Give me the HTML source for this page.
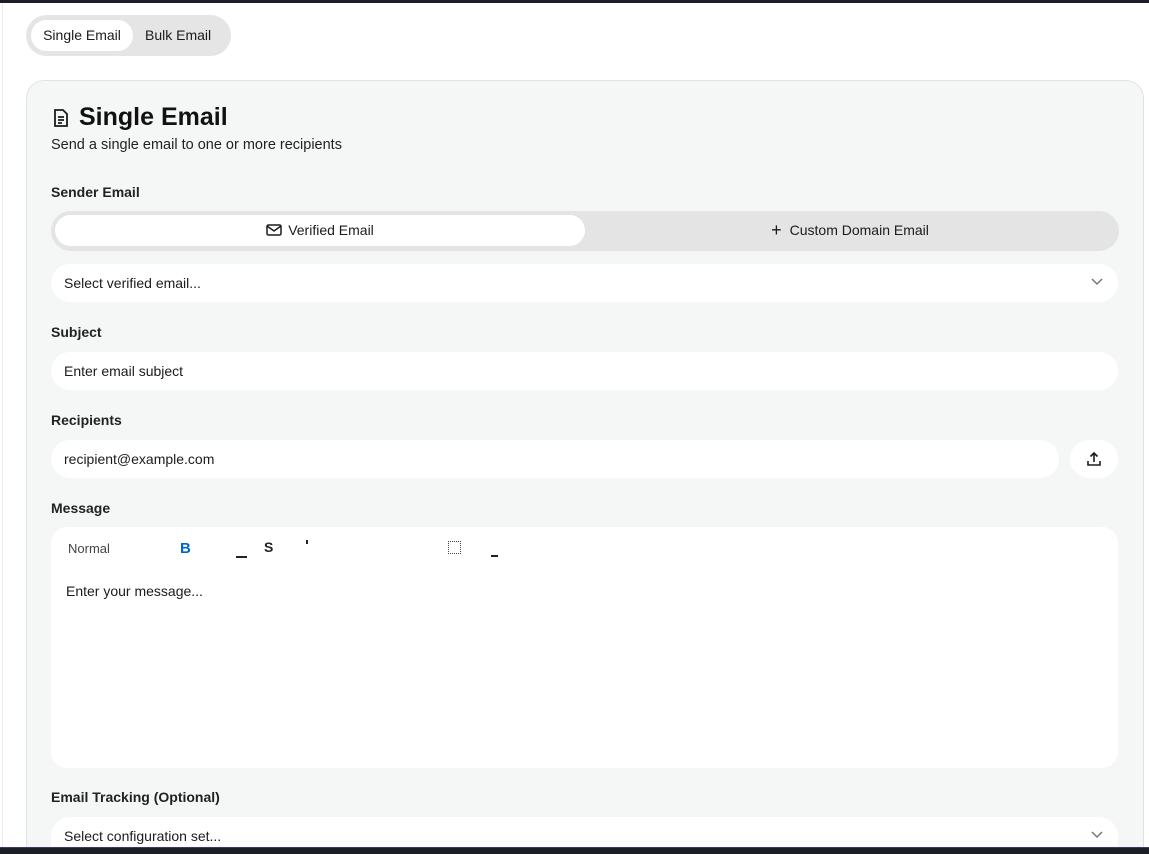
<!DOCTYPE html>
<html style="width:1149px;height:854px;overflow:hidden"><head><meta charset="utf-8"><style>
*{box-sizing:border-box;margin:0;padding:0}
body{width:1149px;height:854px;overflow:hidden;background:#fff;font-family:"Liberation Sans",sans-serif;color:#1b1b1b;position:relative}
.abs{position:absolute}
.topbar{left:0;top:0;width:1149px;height:3px;background:#1b1e25}
.leftline{left:2px;top:3px;width:1px;height:844px;background:#e8ecef}
.bot{left:0;top:847px;width:1149px;height:7px;background:#1b1e25;border-top:1px solid #3c3a6a;z-index:5}
.tabs{left:26px;top:15px;width:205px;height:41px;background:#e5e5e5;border-radius:21px}
.tab{top:5px;height:31px;line-height:31px;font-size:14px;color:#1b1b1b}
.card{left:26px;top:80px;width:1118px;height:767px;background:#f5f7f6;border:1px solid #dce4ea;border-bottom:none;border-radius:18px 18px 0 0}
.lbl{font-size:14px;font-weight:bold;color:#222;left:51px}
.field{left:51px;width:1067px;height:38px;background:#fff;border-radius:19px;font-size:14px;line-height:38px;padding-left:13px;color:#1b1b1b}
.chev{position:absolute;right:15px;top:14px}
</style></head><body>
<div class="abs topbar"></div>
<div class="abs leftline"></div>
<div class="abs tabs">
  <div class="abs tab" style="left:5px;width:102px;background:#fff;border-radius:16px;text-align:center">Single Email</div>
  <div class="abs tab" style="left:119px">Bulk Email</div>
</div>
<div class="abs card"></div>
<svg class="abs" style="left:52px;top:108px" width="18" height="20" viewBox="0 0 18 20" fill="none" stroke="#1b1b1b" stroke-width="1.8"><path d="M3 2h8l4 4v12H3z"/><path d="M6 9h6M6 12h6M6 15h4"/></svg>
<div class="abs" style="left:79px;top:103px;font-size:25px;font-weight:bold;color:#111">Single Email</div>
<div class="abs" style="left:51px;top:137px;font-size:14.5px;color:#222">Send a single email to one or more recipients</div>
<div class="abs lbl" style="top:184px">Sender Email</div>
<div class="abs" style="left:51px;top:211px;width:1068px;height:40px;background:#e4e4e4;border-radius:20px"></div>
<div class="abs" style="left:55px;top:215px;width:530px;height:31px;background:#fff;border-radius:16px;font-size:14px;line-height:31px;text-align:center;color:#1b1b1b">
<svg width="16" height="12" viewBox="0 0 16 12" style="vertical-align:-1px;margin-right:6px" fill="none" stroke="#1b1b1b" stroke-width="1.5"><rect x="1" y="1" width="14" height="10" rx="1.5"/><path d="M1 2l7 5 7-5"/></svg>Verified Email</div>
<div class="abs" style="left:585px;top:215px;width:530px;height:31px;font-size:14px;line-height:31px;text-align:center;color:#1b1b1b"><span style="font-size:18px;margin-right:8px;vertical-align:-1px">+</span>Custom Domain Email</div>
<div class="abs field" style="top:264px">Select verified email...<svg class="chev" width="12" height="8" viewBox="0 0 12 8" fill="none" stroke="#777" stroke-width="1.5"><path d="M1 1l5 5 5-5"/></svg></div>
<div class="abs lbl" style="top:324px">Subject</div>
<div class="abs field" style="top:352px">Enter email subject</div>
<div class="abs lbl" style="top:412px">Recipients</div>
<div class="abs field" style="top:440px;width:1008px">recipient@example.com</div>
<div class="abs" style="left:1070px;top:440px;width:48px;height:38px;background:#fff;border-radius:19px"></div>
<svg class="abs" style="left:1086px;top:451px" width="16" height="16" viewBox="0 0 16 16" fill="none" stroke="#1b1b1b" stroke-width="1.6"><path d="M2 10v4h12v-4M8 11V2M4.5 5.5L8 2l3.5 3.5"/></svg>
<div class="abs lbl" style="top:500px">Message</div>
<div class="abs" style="left:51px;top:527px;width:1067px;height:241px;background:#fff;border-radius:16px"></div>
<div class="abs" style="left:68px;top:541px;font-size:13px;color:#444">Normal</div>
<div class="abs" style="left:180px;top:540px;font-size:15px;font-weight:bold;color:#0066cc">B</div>
<div class="abs" style="left:236px;top:556px;width:11px;height:1.5px;background:#222"></div>
<div class="abs" style="left:264px;top:539px;font-size:14px;font-weight:bold;color:#222">S</div>
<div class="abs" style="left:306px;top:540px;width:1.5px;height:4px;background:#222"></div>
<div class="abs" style="left:448px;top:541px;width:13px;height:13px;border:1.5px dotted #444"></div>
<div class="abs" style="left:491px;top:555px;width:7px;height:1.5px;background:#222"></div>
<div class="abs" style="left:66px;top:583px;font-size:14px;color:#1b1b1b">Enter your message...</div>
<div class="abs lbl" style="top:789px">Email Tracking (Optional)</div>
<div class="abs field" style="top:817px;height:30px;border-radius:19px 19px 0 0">Select configuration set...<svg class="chev" width="12" height="8" viewBox="0 0 12 8" fill="none" stroke="#777" stroke-width="1.5"><path d="M1 1l5 5 5-5"/></svg></div>
<div class="abs bot"></div>
</body></html>
